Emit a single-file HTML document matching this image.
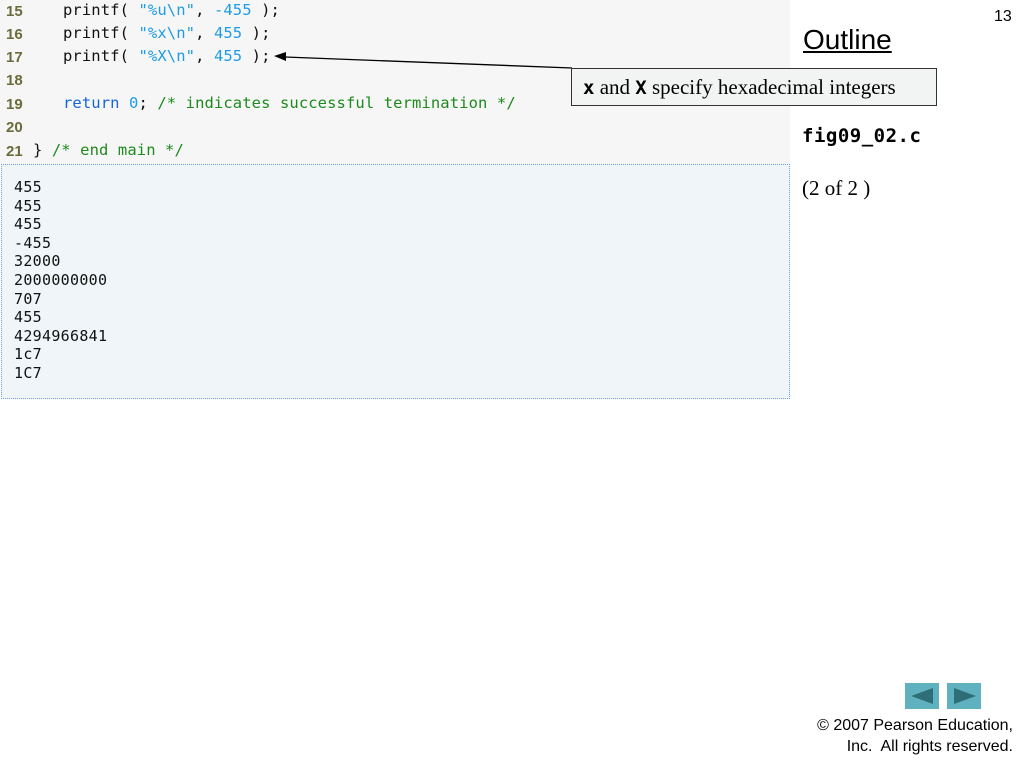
<!DOCTYPE html>
<html><head><meta charset="utf-8"><style>
body{margin:0;width:1024px;height:768px;background:#fff;position:relative;overflow:hidden;font-family:"Liberation Sans",sans-serif}
.code{position:absolute;left:0;top:0;width:790px;height:164px;background:#f6f6f6}
.ln{position:absolute;left:6px;font:bold 15px "Liberation Sans",sans-serif;color:#6b6b3a}
.c{position:absolute;left:63px;font:15.5px "DejaVu Sans Mono",monospace;color:#111;white-space:pre;letter-spacing:0.1px}
.s{color:#1e9be6}.k{color:#1565d6}.g{color:#1d8a1d}
.out{position:absolute;left:1px;top:164px;width:787px;height:233px;background:#eff5f8;border:1px dotted #6f9fd8}
.o{position:absolute;left:12px;top:13px;font:15px/18.6px "DejaVu Sans Mono",monospace;color:#111;white-space:pre;letter-spacing:0.3px}
</style></head><body>
<div class="code">
<div class="ln" style="top:3px">15</div><div class="c" style="top:1px">printf( <span class="s">"%u\n"</span>, <span class="s">-455</span> );</div>
<div class="ln" style="top:26px">16</div><div class="c" style="top:24px">printf( <span class="s">"%x\n"</span>, <span class="s">455</span> );</div>
<div class="ln" style="top:49px">17</div><div class="c" style="top:47px">printf( <span class="s">"%X\n"</span>, <span class="s">455</span> );</div>
<div class="ln" style="top:72px">18</div>
<div class="ln" style="top:96px">19</div><div class="c" style="top:94px"><span class="k">return</span> <span class="s">0</span>; <span class="g">/* indicates successful termination */</span></div>
<div class="ln" style="top:119px">20</div>
<div class="ln" style="top:143px">21</div><div class="c" style="top:141px;left:33px">} <span class="g">/* end main */</span></div>
</div>
<div class="out"><div class="o">455
455
455
-455
32000
2000000000
707
455
4294966841
1c7
1C7</div></div>
<svg style="position:absolute;left:0;top:0" width="1024" height="120"><line x1="285" y1="57" x2="572" y2="68" stroke="#000" stroke-width="1.3"/><polygon points="274,56 286,52 286,61" fill="#000"/></svg>
<div style="position:absolute;left:571px;top:68px;width:366px;height:38px;background:#f2f4f4;border:1px solid #333;box-sizing:border-box;font:21px 'Liberation Serif',serif;line-height:36px;padding-left:11px;white-space:nowrap"><b style="font-family:'DejaVu Sans Mono',monospace;font-size:19px">x</b> and <b style="font-family:'DejaVu Sans Mono',monospace;font-size:19px">X</b> specify hexadecimal integers</div>
<div style="position:absolute;left:994px;top:8px;font-size:16px">13</div>
<div style="position:absolute;left:803px;top:24px;font-size:28px;text-decoration:underline">Outline</div>
<div style="position:absolute;left:802px;top:125px;font:bold 19px 'DejaVu Sans Mono',monospace;letter-spacing:0.5px">fig09_02.c</div>
<div style="position:absolute;left:802px;top:176px;font:21px 'Liberation Serif',serif">(2 of 2 )</div>
<div style="position:absolute;left:905px;top:683px;width:34px;height:26px;background:#5fb1c0"><div style="position:absolute;left:6px;top:5px;border-right:22px solid #2d6e77;border-top:8px solid transparent;border-bottom:8px solid transparent"></div></div>
<div style="position:absolute;left:947px;top:683px;width:34px;height:26px;background:#5fb1c0"><div style="position:absolute;left:7px;top:5px;border-left:22px solid #2d6e77;border-top:8px solid transparent;border-bottom:8px solid transparent"></div></div>
<div style="position:absolute;right:11px;top:715px;font-size:16px;line-height:21px;text-align:right">© 2007 Pearson Education,<br>Inc.&nbsp; All rights reserved.</div>
</body></html>
